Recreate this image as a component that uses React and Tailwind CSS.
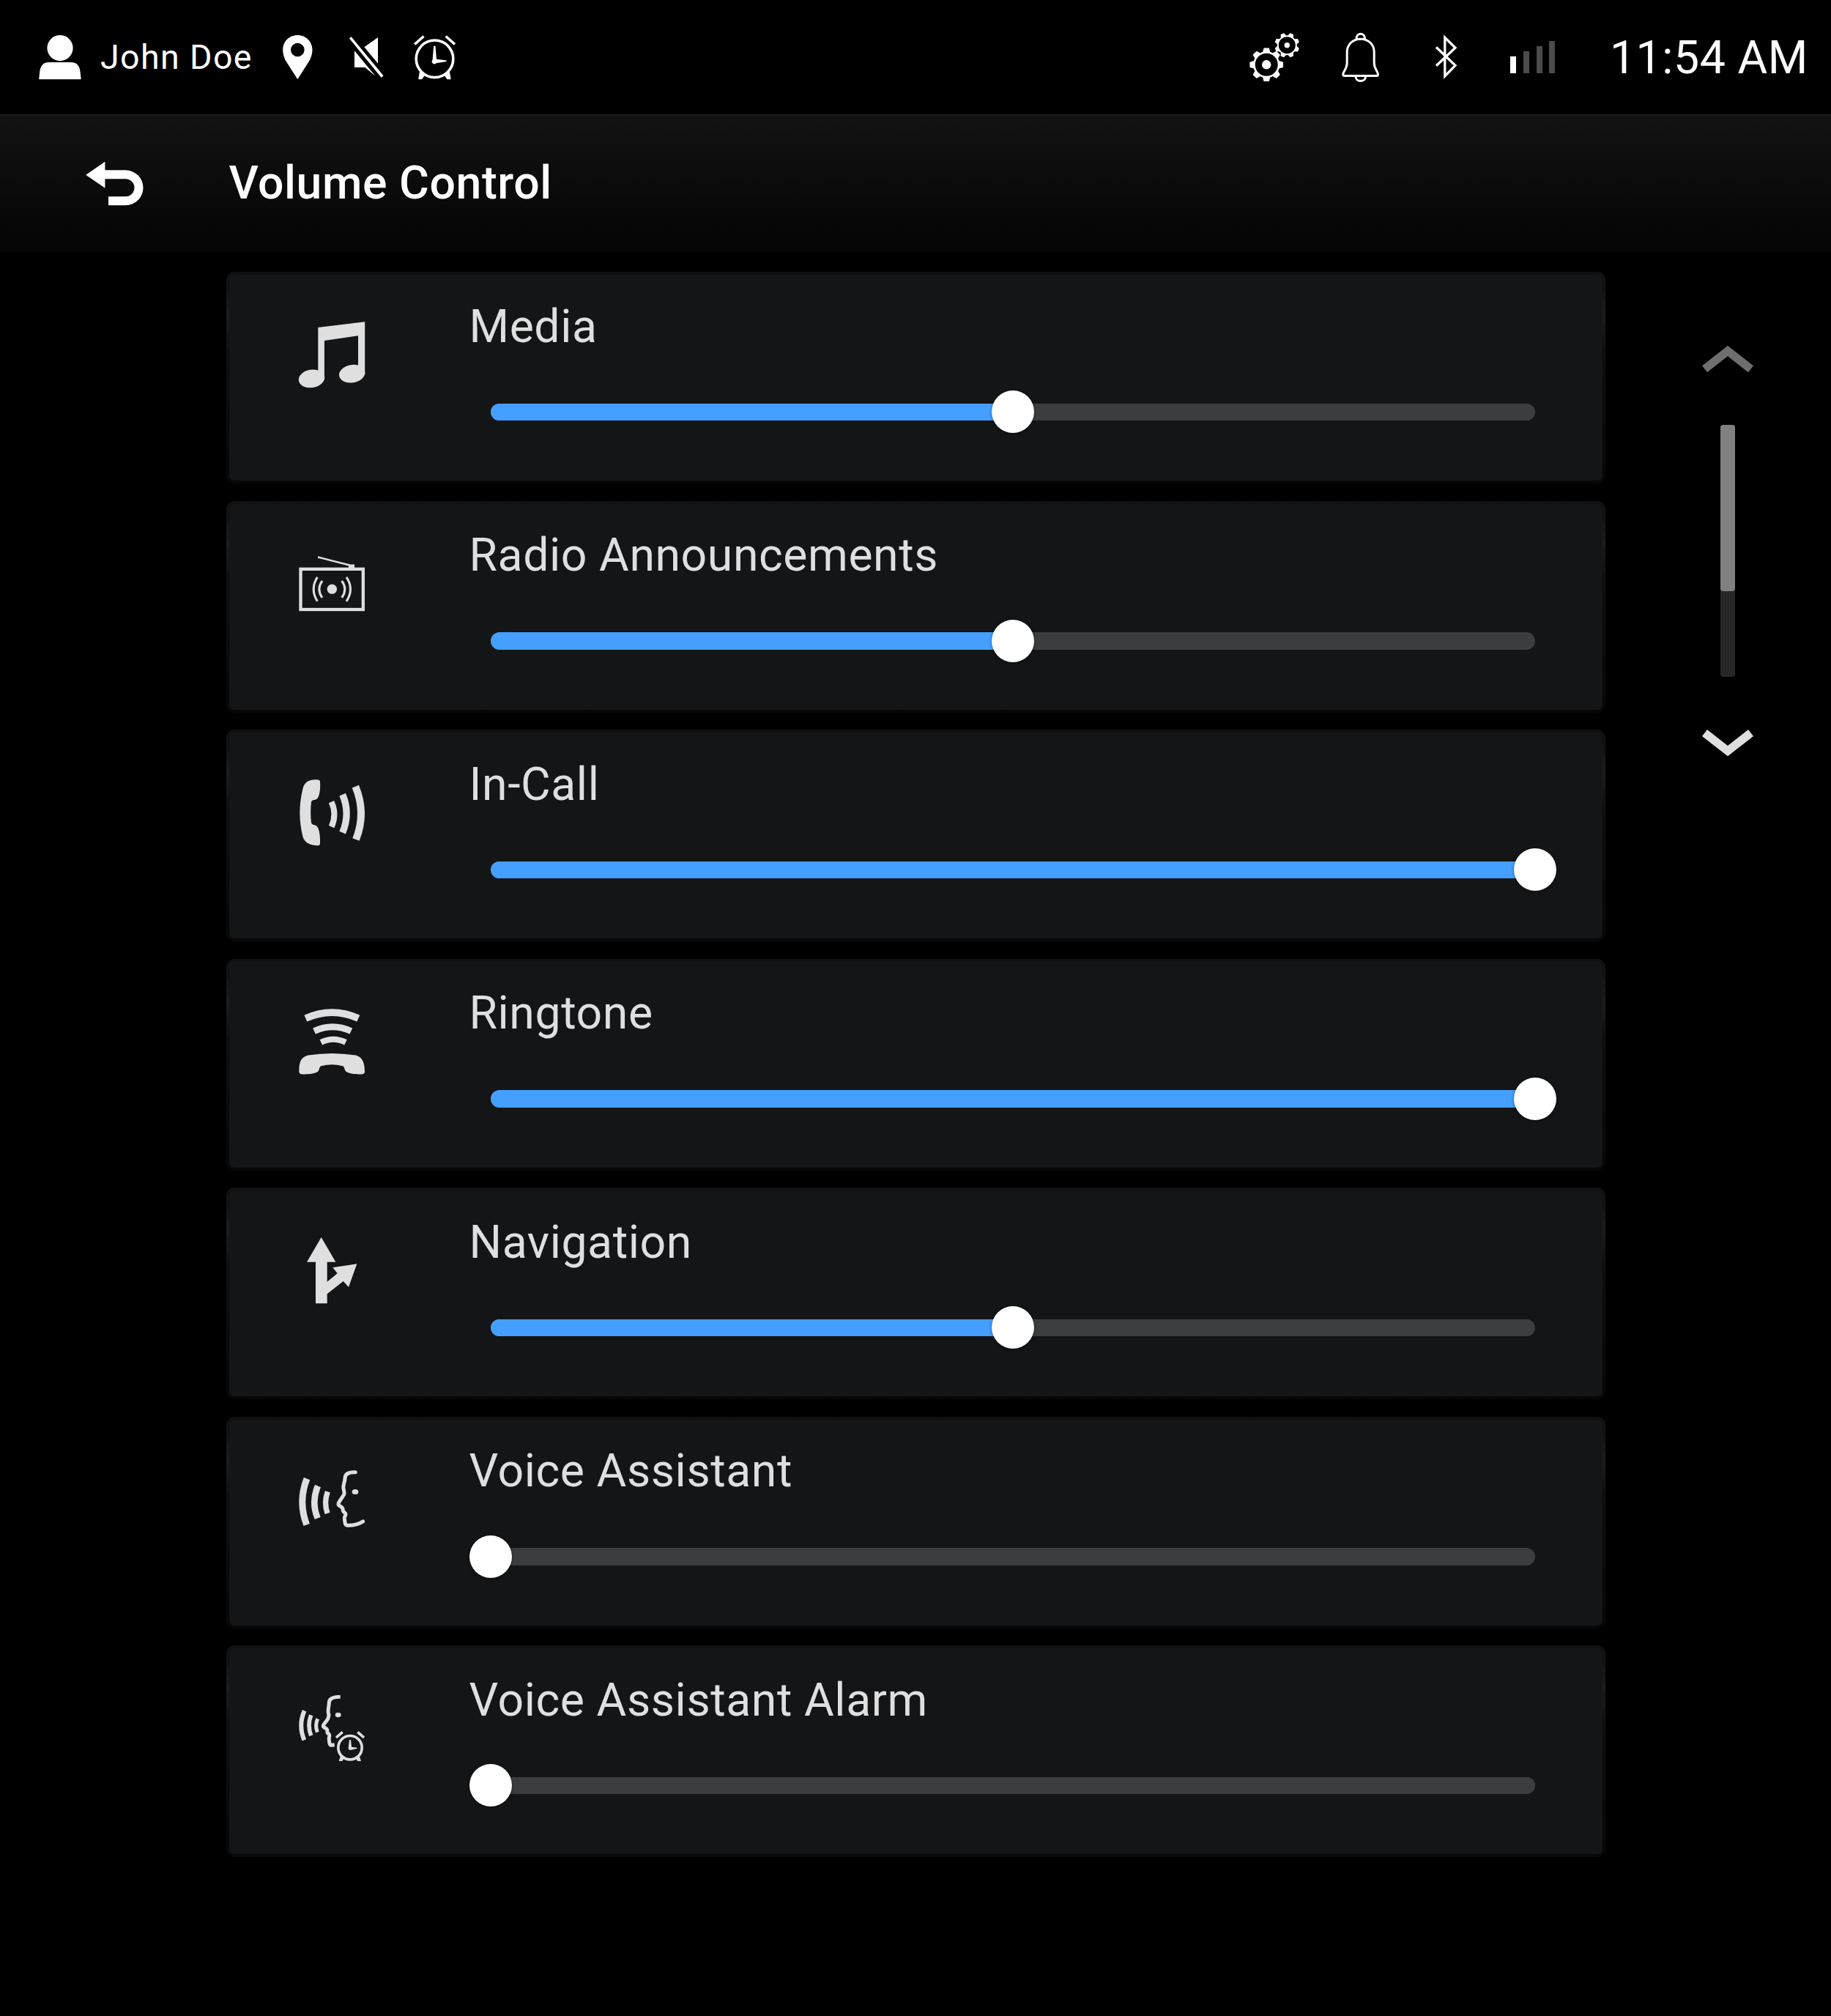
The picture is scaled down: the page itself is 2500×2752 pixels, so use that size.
import React, { useState } from 'react';

const toothed = (cx, cy, inner, outer, half, offset) =>
    Array.from({ length: 8 }, (_, i) => (
        <path
            key={i}
            transform={`translate(${cx} ${cy}) rotate(${offset + i * 45})`}
            d={`M${-half - 1} ${-inner}L${-half + 0.6} ${-outer}H${half - 0.6}L${half + 1} ${-inner}Z`}
        />
    ));

const UserIcon = () => (
    <svg className="w-[58px] h-[61px] fill-white" viewBox="53 48 58 61">
        <circle cx="82" cy="65.6" r="17.6" />
        <path d="M66.500 85H97C105.500 85 108.500 90.500 109.500 97.500L110.700 108.300H53.200L54.300 97.500C55.300 90.500 58.500 85 66.500 85Z" />
    </svg>
);

const PinIcon = () => (
    <svg className="w-[41px] h-[61px] fill-white" viewBox="385.500 48 41 61">
        <path
            fillRule="evenodd"
            d="M405.800 48C417.500 48 426 57 426 68C426 73 424.500 77.500 422.500 82L405.800 108.300L389 82C387 77.500 385.700 73 385.700 68C385.700 57 394 48 405.800 48ZM405.800 58.700A9.300 9.300 0 1 0 405.800 77.300A9.300 9.300 0 1 0 405.800 58.700Z"
        />
    </svg>
);

const MuteIcon = () => (
    <svg className="w-[48px] h-[61px] fill-white" viewBox="476 48 48 61">
        <path d="M476.800 52.300L479.700 50.200L523.500 103.300L520.700 106Z" />
        <path d="M516 51V86.700L497.400 64.300Z" />
        <path d="M484 69.300L512.500 103.800L498.500 92H484Z" />
    </svg>
);

const ClockIcon = () => (
    <svg className="w-[59px] h-[61px] fill-white" viewBox="564.500 48 59 61">
        <circle cx="594" cy="80.300" r="25.300" fill="none" stroke="#fff" strokeWidth="3.600" />
        <path d="M566.700 60.500L579 49.500M609.200 49.500L621.500 60.500" stroke="#fff" strokeWidth="3.600" />
        <path d="M571.700 108.300H576.500L581 102L573.500 97.300ZM616.200 108.300H611L606.500 102L614.300 97.300Z" />
        <path d="M592.700 62.700H595L596.500 80.700L610 82.500V84L596 86.300A3.300 3.300 0 0 1 591 82Z" />
    </svg>
);

const GearsIcon = () => (
    <svg className="w-[70px] h-[67px] fill-white" viewBox="1706 45 70 67">
        <circle cx="1729.200" cy="88.300" r="16.800" fill="none" stroke="#fff" strokeWidth="2.600" />
        <circle cx="1729.200" cy="88.300" r="6.200" />
        {toothed(1729.2, 88.3, 17, 22.8, 4.2, 0)}
        <circle cx="1757.300" cy="61.700" r="12.500" fill="none" stroke="#fff" strokeWidth="2" />
        <circle cx="1757.300" cy="61.700" r="3.700" />
        {toothed(1757.3, 61.7, 12.5, 16.9, 3, 22.5)}
    </svg>
);

const BellIcon = () => (
    <svg className="w-[52px] h-[70px]" viewBox="1832 43 52 70" fill="none" stroke="#fff" strokeWidth="3" strokeLinejoin="round">
        <path d="M1852.200 53.500V51A5.600 5.600 0 0 1 1863.300 51V53.500" />
        <path d="M1857.700 53.200C1846.500 53.200 1839.200 61.500 1839.200 71V86C1839.200 94 1833.800 97.500 1833.800 101.500Q1833.800 103.600 1836 103.600H1879.500Q1881.500 103.600 1881.500 101.500C1881.500 97.500 1876.200 94 1876.200 86V71C1876.200 61.500 1869 53.200 1857.700 53.200Z" />
        <path d="M1851 104.500C1851 108 1854 110.500 1857.700 110.500C1861.500 110.500 1864.500 108 1864.500 104.500" />
    </svg>
);

const BluetoothIcon = () => (
    <svg className="w-[32px] h-[64px]" viewBox="1959 47 32 64" fill="none" stroke="#fff" strokeWidth="3.300">
        <path d="M1961 65.500L1987 90.400L1972.800 105V52.300L1987 66.300L1961 90.800" />
    </svg>
);

const SignalBars = () => (
    <div className="flex items-end justify-between h-11 w-[61.500px]">
        <div className="w-2 h-[23px] bg-white" />
        <div className="w-2 h-[30px] bg-[#4c4c4c]" />
        <div className="w-2 h-[37px] bg-[#4c4c4c]" />
        <div className="w-2 h-11 bg-[#4c4c4c]" />
    </div>
);

const BackIcon = () => (
    <svg className="w-[80px] h-[62px] fill-white" viewBox="117 220 80 62">
        <path d="M117.200 238.700L143.400 220.700V232.300H171.500A24 24 0 0 1 171.500 280.300H148V268.300H171.500A12 12 0 0 0 171.500 244.300H143.400V256.700Z" />
    </svg>
);

const MediaIcon = () => (
    <svg className="size-[90px] fill-[#dfdfdf]" viewBox="408 439 90 90" overflow="visible">
        <path d="M434.300 447L498.200 439.300V510H489V458.300L442.900 465V516H434.300Z" />
        <ellipse cx="425.500" cy="516.900" rx="17.800" ry="12.200" transform="rotate(-9 425.500 516.900)" />
        <ellipse cx="480.700" cy="510.200" rx="17.800" ry="12.200" transform="rotate(-9 480.700 510.200)" />
    </svg>
);

const RadioIcon = () => (
    <svg className="size-[90px] fill-[#dfdfdf]" viewBox="84 34.500 270 270">
        <rect x="91.500" y="112" width="256" height="165.500" fill="none" stroke="#dfdfdf" strokeWidth="13" />
        <rect x="288" y="93" width="24" height="14" />
        <circle cx="220" cy="194" r="20" />
        <g fill="none" stroke="#dfdfdf">
            <path d="M162 63L292 96" strokeWidth="7" />
            <path d="M160 145Q129 194 160 244M180 160Q155 194 180 229M260 160Q285 194 260 229M279 145Q312 194 279 244" strokeWidth="9" />
        </g>
    </svg>
);

const InCallIcon = () => (
    <svg className="size-[90px] fill-[#dfdfdf]" viewBox="84 72 270 270" overflow="visible">
        <path d="M150 73Q171 70 171 82C173 105 170 140 160 150C150 160 138 152 135 165Q130 208 135 248C138 262 152 254 160 266C170 280 172 315 171 335Q169 344 160 343C135 341 108 335 100 305Q76 208 100 112C106 82 128 74 150 73Z" />
        <g fill="none" stroke="#dfdfdf">
            <path d="M217.500 164Q241 214 218 266" strokeWidth="24" />
            <path d="M263 134Q296 211 263 290" strokeWidth="28" />
            <path d="M316 101Q361 210 318 318" strokeWidth="30" />
        </g>
    </svg>
);

const RingtoneIcon = () => (
    <svg className="size-[90px] fill-[#dfdfdf]" viewBox="84 79.500 270 270" overflow="visible">
        <path d="M85 335C86 300 92 282 122 273Q220 258 317 273C347 282 353 305 354 340Q353 350 345 350C325 352 295 350 282 342C268 335 274 322 264 317Q220 306 175 317C164 322 172 335 158 342C145 350 115 352 93 350Q84 349 85 335Z" />
        <g fill="none" stroke="#dfdfdf">
            <path d="M112 122Q220 74 328 122" strokeWidth="29" />
            <path d="M147 174Q222 140 298 174" strokeWidth="27" />
            <path d="M175 220Q225 195 276 220" strokeWidth="24" />
        </g>
    </svg>
);

const NavigationIcon = () => (
    <svg className="size-[90px] fill-[#dfdfdf]" viewBox="84 57 270 270" overflow="visible">
        <path d="M176 57L235 158H200V239L242 205L223 181L322 166L288 261L266 237L200 289V328H153V158H117Z" />
    </svg>
);

const VoiceIcon = () => (
    <svg className="size-[90px]" viewBox="84 64.500 270 270" fill="none" stroke="#dfdfdf">
        <path d="M117 117Q80 211 116 306" strokeWidth="27" />
        <path d="M162 147Q134 212 161 279" strokeWidth="26" />
        <path d="M202 170Q186 213 201 259" strokeWidth="22" />
        <path
            d="M316 91C295 90 274 94 273 115C273 130 264 145 267 158C270 168 272 175 269 182C262 195 247 212 246 220C244 228 258 230 263 238C266 245 262 252 272 256C282 262 270 270 271 280C273 295 272 307 282 308C305 309 330 303 347 292"
            strokeWidth="15"
            strokeLinecap="round"
        />
        <ellipse cx="315" cy="171" rx="13" ry="10.500" fill="#dfdfdf" stroke="none" />
    </svg>
);

const VoiceAlarmIcon = () => (
    <svg className="size-[90px]" viewBox="84 72 270 270" fill="none" stroke="#dfdfdf">
        <path d="M107 136Q81 195 106 256" strokeWidth="18" />
        <path d="M134 154Q118 195 134 238" strokeWidth="17" />
        <path d="M161 169Q149 196 160 224" strokeWidth="15" />
        <path
            d="M254 79C225 79 209 86 208 102C208 118 202 130 205 145C209 155 206 162 203 169C197 180 184 192 184 198C184 206 197 206 200 214C202 222 198 228 206 230C214 235 206 245 208 255C209 268 210 277 218 277L230 275"
            strokeWidth="15"
        />
        <circle cx="294" cy="287" r="48.500" strokeWidth="11" />
        <path d="M237 246L263 223M325 223L351 246" strokeWidth="11" />
        <g fill="#dfdfdf" stroke="none">
            <ellipse cx="245" cy="153" rx="12" ry="9.500" />
            <path d="M248 342H262L271 328L255 320ZM339 342H324L316 328L332 320Z" />
            <path d="M291 255H297L300 284L322 287V291L299 296A8 8 0 0 1 287 288Z" />
        </g>
    </svg>
);

const channels = [
    { label: 'Media', icon: MediaIcon, value: 50 },
    { label: 'Radio Announcements', icon: RadioIcon, value: 50 },
    { label: 'In-Call', icon: InCallIcon, value: 100 },
    { label: 'Ringtone', icon: RingtoneIcon, value: 100 },
    { label: 'Navigation', icon: NavigationIcon, value: 50 },
    { label: 'Voice Assistant', icon: VoiceIcon, value: 0 },
    { label: 'Voice Assistant Alarm', icon: VoiceAlarmIcon, value: 0 },
];

const Slider = ({ value }) => (
    <div className="relative mt-[69px] ml-[29.500px] w-[1426px] h-[23.400px] rounded-full bg-[#3c3d3f]">
        <div className="h-full rounded-full bg-[#449fff]" style={{ width: `${value}%` }} />
        <div
            className="absolute top-1/2 size-[58px] -translate-x-1/2 -translate-y-1/2 rounded-full bg-white shadow-[0_1px_4px_rgba(0,0,0,0.4)]"
            style={{ left: `${value}%` }}
        />
    </div>
);

const VolumeCard = ({ label, icon: Icon, value }) => (
    <div className="h-[289px] rounded-[11px] p-1 bg-[linear-gradient(to_bottom,#101010_0%,#121212_8%,#1d1d1d_20%,#0d0e0e_38%,#070707_100%)]">
        <div className="flex h-full rounded-[7px] bg-[#141517] pl-[95px]">
            <div className="w-[232.500px] pt-[63.700px]">
                <Icon />
            </div>
            <div className="pt-[33.700px]">
                <h2 className="text-[62.5px] leading-[73px] tracking-[0.58px] text-[#dfdfdf] whitespace-nowrap">{label}</h2>
                <Slider value={value} />
            </div>
        </div>
    </div>
);

const StatusBar = () => (
    <header className="flex h-[156px] items-center justify-between bg-black pl-[53px] pr-[31px]">
        <div className="flex items-center">
            <UserIcon />
            <span className="w-[274.500px] pl-[26px] text-[46.500px] leading-none tracking-[0.03em] whitespace-nowrap">John Doe</span>
            <PinIcon />
            <div className="ml-[49px]"><MuteIcon /></div>
            <div className="ml-10"><ClockIcon /></div>
        </div>
        <div className="flex items-center">
            <GearsIcon />
            <div className="ml-14"><BellIcon /></div>
            <div className="ml-[75px]"><BluetoothIcon /></div>
            <div className="ml-[71px]"><SignalBars /></div>
            <span className="w-[345.500px] pt-0.5 text-right text-[62.500px] leading-none tracking-[0.58px] whitespace-nowrap">11:54 AM</span>
        </div>
    </header>
);

const Scroller = () => (
    <aside className="flex w-[70px] flex-col items-center pt-[101px]">
        <svg className="w-[70px] h-[37px] fill-[#6f6f6f]" viewBox="0 0 70 37">
            <path d="M35 0L70 27.300L63 36.300L35 14.300L7 36.300L0 27.300Z" />
        </svg>
        <div className="mt-[71px] h-[343.500px] w-5 rounded-[4px] bg-[#272727]">
            <div className="h-[227px] rounded-[4px] bg-[#808080]" />
        </div>
        <svg className="mt-[72px] w-[70px] h-[37px] fill-[#dfdfdf]" viewBox="0 0 70 37">
            <path d="M35 36.300L70 9L63 0L35 22L7 0L0 9Z" />
        </svg>
    </aside>
);

const App = () => {
    const [levels] = useState(channels);

    return (
        <div className="flex h-[2752px] w-[2500px] flex-col overflow-hidden bg-black text-white font-[Roboto,sans-serif]">
            <StatusBar />

            <div className="flex h-[188px] items-center border-t-2 border-[#1c1c1c] bg-linear-to-b from-[#131313] to-[#050505] pl-[117px]">
                <BackIcon />
                <h1 className="ml-[115.500px] pb-0.5 text-[62.500px] leading-none font-medium tracking-[0.58px]">Volume Control</h1>
            </div>

            <div className="flex pt-[27px] pl-[309px]">
                <main className="flex w-[1882.500px] flex-col gap-[23.500px]">
                    {levels.map((channel) => (
                        <VolumeCard key={channel.label} {...channel} />
                    ))}
                </main>
                <div className="ml-[132.500px]">
                    <Scroller />
                </div>
            </div>
        </div>
    );
};

export default App;
